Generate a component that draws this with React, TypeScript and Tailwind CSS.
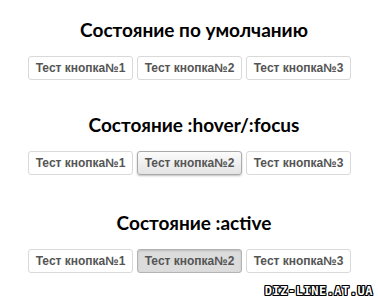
import React from "react";

type State = "default" | "hover" | "active";

const sections: { title: string; state: State; gap: string }[] = [
  { title: "Состояние по умолчанию", state: "default", gap: "mb-[32px]" },
  { title: "Состояние :hover/:focus", state: "hover", gap: "mb-[35px]" },
  { title: "Состояние :active", state: "active", gap: "mb-0" },
];

function TestButton({ label, state }: { label: string; state: State }) {
  let cls =
    "h-[24px] w-[105px] rounded-[3px] border text-[12px] font-bold text-[#555] font-['Liberation_Sans',Arial,sans-serif] leading-none";
  if (state === "hover") {
    cls +=
      " border-[#a9a9a9] bg-gradient-to-b from-[#fbfbfb] to-[#e4e4e4] shadow-[0_1px_2px_rgba(0,0,0,0.25)]";
  } else if (state === "active") {
    cls += " border-[#b3b3b3] bg-[#dcdcdc] shadow-[inset_0_1px_2px_rgba(0,0,0,0.15)]";
  } else {
    cls += " border-[#d9d9d9] bg-white";
  }
  return <button className={cls}>{label}</button>;
}

export default function App() {
  return (
    <main className="relative h-[304px] w-[378px] bg-white pt-[17px]">
      {sections.map((s, i) => (
        <section key={i} className={`${s.gap} flex flex-col items-center`}>
          <h2 className="text-[19px] font-bold leading-[26px] text-black font-['Lato',sans-serif] pl-[10px]">
            {s.title}
          </h2>
          <div className="mt-[13px] flex gap-[4px] pl-[1px]">
            <TestButton label="Тест кнопка№1" state="default" />
            <TestButton label="Тест кнопка№2" state={s.state} />
            <TestButton label="Тест кнопка№3" state="default" />
          </div>
        </section>
      ))}
      <div className="absolute right-[5px] bottom-[4px] text-[12px] font-black tracking-[0.5px] text-white font-['DejaVu_Sans_Mono',monospace] [text-shadow:1px_0_0_#000,-1px_0_0_#000,0_1px_0_#000,0_-1px_0_#000,1px_1px_0_#000,-1px_-1px_0_#000,1px_-1px_0_#000,-1px_1px_0_#000]">
        DIZ-LINE.AT.UA
      </div>
    </main>
  );
}
